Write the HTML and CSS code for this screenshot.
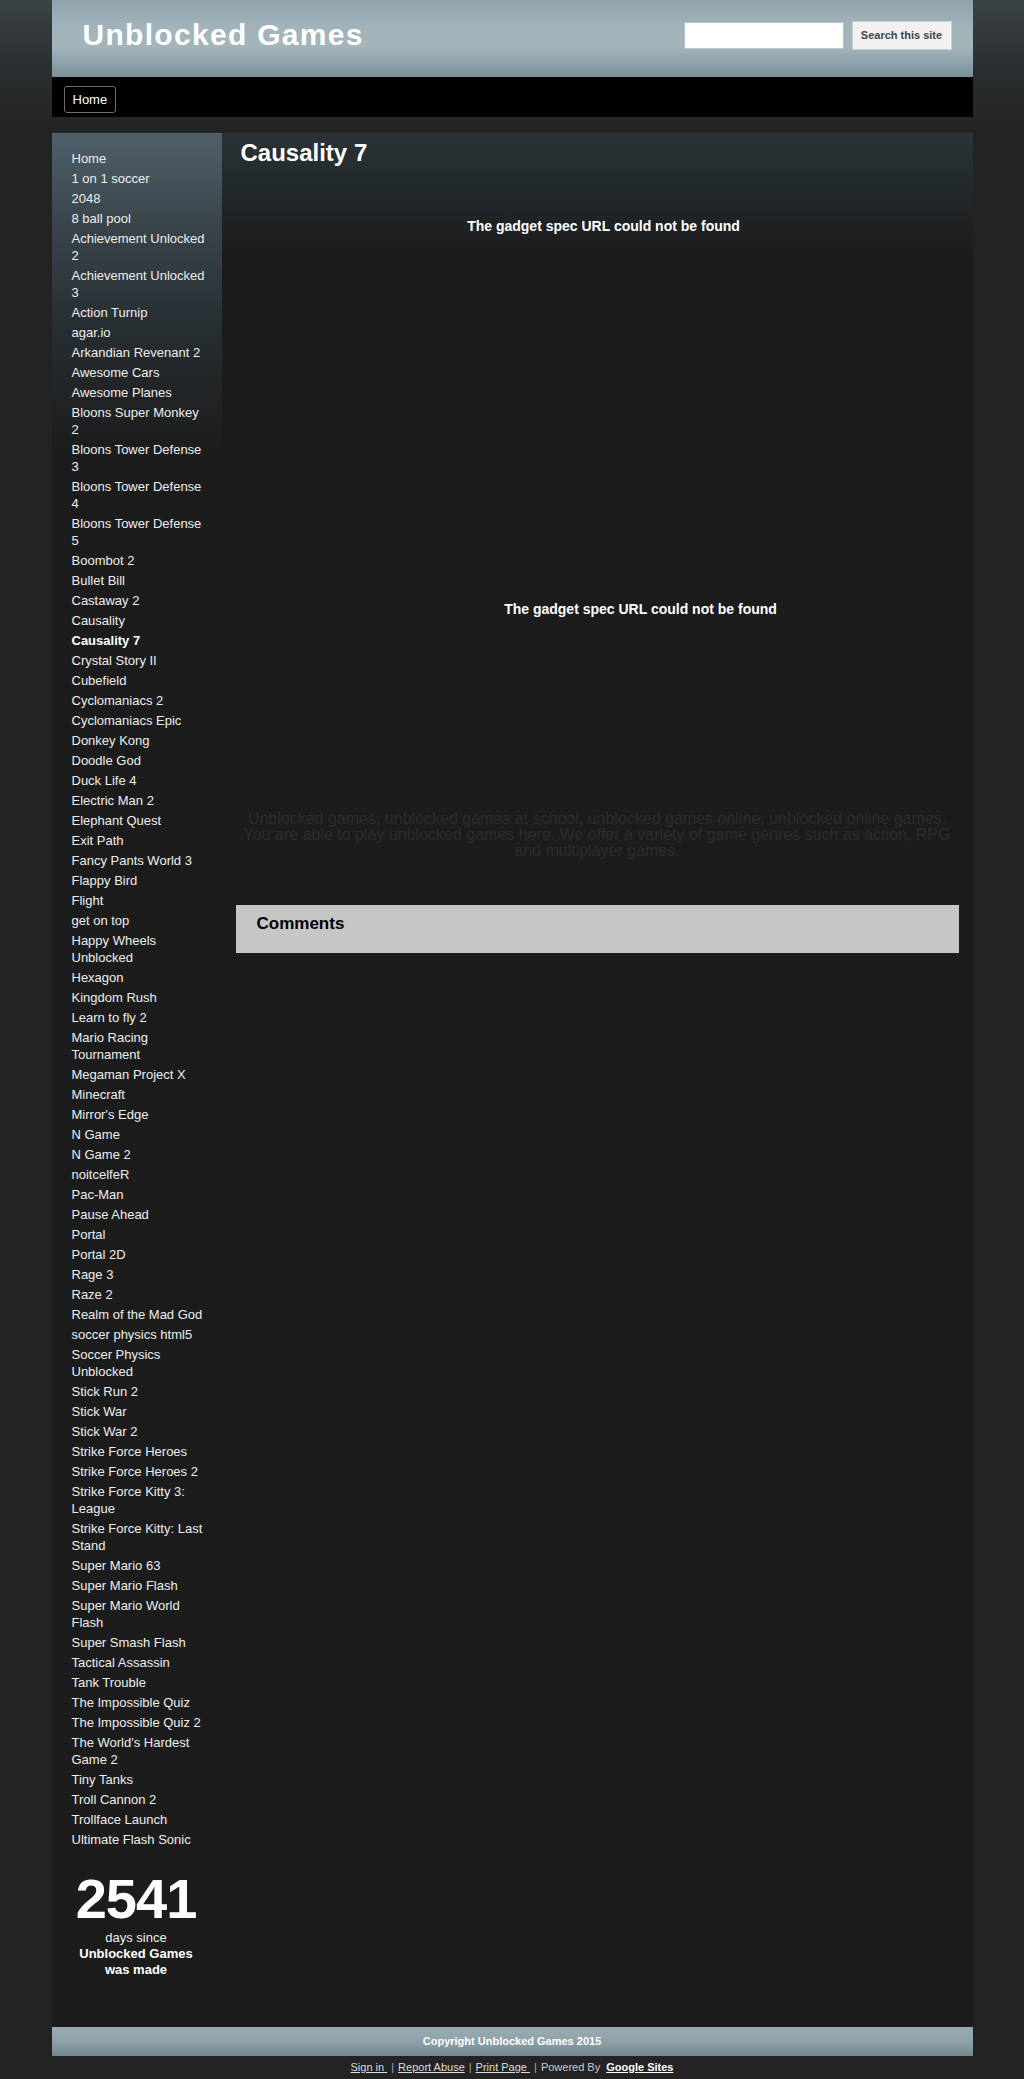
FILE: index.html
```html
<!DOCTYPE html>
<html lang="en">
<head>
  <meta charset="UTF-8">
  <meta name="viewport" content="width=device-width, initial-scale=1.0">
  <title>Causality 7 - Unblocked Games</title>
  <link rel="stylesheet" href="styles.css">
</head>
<body>
  <div class="page">
    <div class="header">
      <a class="site-title" href="#">Unblocked Games</a>
      <form class="search">
        <input type="text" class="search-box">
        <button type="button" class="search-btn">Search this site</button>
      </form>
    </div>

    <div class="nav">
      <a class="nav-item" href="#">Home</a>
    </div>

    <div class="content">
      <div class="sidebar">
        <ul class="game-list">
          <li><a href="#">Home</a></li>
          <li><a href="#">1 on 1 soccer</a></li>
          <li><a href="#">2048</a></li>
          <li><a href="#">8 ball pool</a></li>
          <li><a href="#">Achievement Unlocked 2</a></li>
          <li><a href="#">Achievement Unlocked 3</a></li>
          <li><a href="#">Action Turnip</a></li>
          <li><a href="#">agar.io</a></li>
          <li><a href="#">Arkandian Revenant 2</a></li>
          <li><a href="#">Awesome Cars</a></li>
          <li><a href="#">Awesome Planes</a></li>
          <li><a href="#">Bloons Super Monkey 2</a></li>
          <li><a href="#">Bloons Tower Defense 3</a></li>
          <li><a href="#">Bloons Tower Defense 4</a></li>
          <li><a href="#">Bloons Tower Defense 5</a></li>
          <li><a href="#">Boombot 2</a></li>
          <li><a href="#">Bullet Bill</a></li>
          <li><a href="#">Castaway 2</a></li>
          <li><a href="#">Causality</a></li>
          <li class="current"><a href="#">Causality 7</a></li>
          <li><a href="#">Crystal Story II</a></li>
          <li><a href="#">Cubefield</a></li>
          <li><a href="#">Cyclomaniacs 2</a></li>
          <li><a href="#">Cyclomaniacs Epic</a></li>
          <li><a href="#">Donkey Kong</a></li>
          <li><a href="#">Doodle God</a></li>
          <li><a href="#">Duck Life 4</a></li>
          <li><a href="#">Electric Man 2</a></li>
          <li><a href="#">Elephant Quest</a></li>
          <li><a href="#">Exit Path</a></li>
          <li><a href="#">Fancy Pants World 3</a></li>
          <li><a href="#">Flappy Bird</a></li>
          <li><a href="#">Flight</a></li>
          <li><a href="#">get on top</a></li>
          <li><a href="#">Happy Wheels Unblocked</a></li>
          <li><a href="#">Hexagon</a></li>
          <li><a href="#">Kingdom Rush</a></li>
          <li><a href="#">Learn to fly 2</a></li>
          <li><a href="#">Mario Racing Tournament</a></li>
          <li><a href="#">Megaman Project X</a></li>
          <li><a href="#">Minecraft</a></li>
          <li><a href="#">Mirror's Edge</a></li>
          <li><a href="#">N Game</a></li>
          <li><a href="#">N Game 2</a></li>
          <li><a href="#">noitcelfeR</a></li>
          <li><a href="#">Pac-Man</a></li>
          <li><a href="#">Pause Ahead</a></li>
          <li><a href="#">Portal</a></li>
          <li><a href="#">Portal 2D</a></li>
          <li><a href="#">Rage 3</a></li>
          <li><a href="#">Raze 2</a></li>
          <li><a href="#">Realm of the Mad God</a></li>
          <li><a href="#">soccer physics html5</a></li>
          <li><a href="#">Soccer Physics Unblocked</a></li>
          <li><a href="#">Stick Run 2</a></li>
          <li><a href="#">Stick War</a></li>
          <li><a href="#">Stick War 2</a></li>
          <li><a href="#">Strike Force Heroes</a></li>
          <li><a href="#">Strike Force Heroes 2</a></li>
          <li><a href="#">Strike Force Kitty 3: League</a></li>
          <li><a href="#">Strike Force Kitty: Last Stand</a></li>
          <li><a href="#">Super Mario 63</a></li>
          <li><a href="#">Super Mario Flash</a></li>
          <li><a href="#">Super Mario World Flash</a></li>
          <li><a href="#">Super Smash Flash</a></li>
          <li><a href="#">Tactical Assassin</a></li>
          <li><a href="#">Tank Trouble</a></li>
          <li><a href="#">The Impossible Quiz</a></li>
          <li><a href="#">The Impossible Quiz 2</a></li>
          <li><a href="#">The World's Hardest Game 2</a></li>
          <li><a href="#">Tiny Tanks</a></li>
          <li><a href="#">Troll Cannon 2</a></li>
          <li><a href="#">Trollface Launch</a></li>
          <li><a href="#">Ultimate Flash Sonic</a></li>
        </ul>

        <div class="counter">
          <div class="counter-num">2541</div>
          <div class="counter-text">days since<br><b>Unblocked Games<br>was made</b></div>
        </div>
      </div>

      <div class="main">
        <h1 class="page-title">Causality 7</h1>

        <div class="gadget gadget-one">
          <b>The gadget spec URL could not be found</b>
        </div>

        <div class="gadget gadget-two">
          <b>The gadget spec URL could not be found</b>
        </div>

        <p class="seo-text">Unblocked games, unblocked games at school, unblocked games online, unblocked online games.<br>You are able to play unblocked games here. We offer a variety of game genres such as action, RPG<br>and multiplayer games.</p>

        <div class="comments">
          <h3>Comments</h3>
        </div>
      </div>
    </div>

    <div class="footer">Copyright Unblocked Games 2015</div>
  </div>

  <div class="site-links">
    <a href="#">Sign in </a><span class="sep">|</span><a href="#">Report Abuse</a><span class="sep">|</span><a href="#">Print Page </a><span class="sep">|</span><span class="powered">Powered By</span><a class="google" href="#">Google Sites</a>
  </div>
</body>
</html>
```

FILE: styles.css
```css
body {
  margin: 0;
  font-family: 'Liberation Sans', Arial, sans-serif;
  font-size: 13px;
  color: #eeeeee;
  background: #232323 linear-gradient(#3b4246 0, #2a2e30 70px, #232323 135px) no-repeat;
}

a {
  color: #eeeeee;
  text-decoration: none;
}

.page {
  width: 921px;
  margin: 0 auto;
}

/* header */
.header {
  height: 77px;
  box-sizing: border-box;
  padding: 0 21px 7px 31px;
  display: flex;
  align-items: center;
  justify-content: space-between;
  background: linear-gradient(#8fa3ab 0, #a2b4bb 35%, #a4b5bc 60%, #8aa0a8 85%, #7a9099 100%);
}

.site-title {
  font-size: 30px;
  line-height: 34px;
  font-weight: bold;
  letter-spacing: 1.3px;
  color: #ffffff;
}

.search {
  display: flex;
  align-items: center;
  gap: 8px;
  margin: 0;
}

.search-box {
  width: 160px;
  height: 27px;
  box-sizing: border-box;
  border: 1px solid #b9c3c7;
  background: #ffffff;
  padding: 2px 4px;
}

.search-btn {
  width: 100px;
  height: 29px;
  border: 1px solid #c9d0d3;
  background: #f1f1f1;
  color: #444444;
  font-family: 'Liberation Sans', Arial, sans-serif;
  font-size: 11px;
  font-weight: bold;
  padding: 0;
}

/* nav */
.nav {
  height: 40px;
  box-sizing: border-box;
  background: #000000;
  padding: 9px 12px 0;
}

.nav-item {
  display: inline-block;
  height: 27px;
  line-height: 25px;
  box-sizing: border-box;
  padding: 0 8px;
  border: 1px solid #6d6d6d;
  border-radius: 3px;
  font-size: 13px;
  color: #ffffff;
}

/* content */
.content {
  margin-top: 16px;
  display: grid;
  grid-template-columns: 170px 1fr;
  background: #1c1c1c;
}

.sidebar {
  padding: 17px 15px 49px 20px;
  background: linear-gradient(#50606a 0, #3a454b 90px, #262d31 200px, #1c1c1c 320px);
}

.game-list {
  list-style: none;
  margin: 0;
  padding: 0;
}

.game-list li {
  line-height: 17px;
  margin-bottom: 3px;
}

.game-list li.current a {
  font-weight: bold;
  color: #ffffff;
}

.counter {
  margin-top: 22px;
  padding-right: 6px;
  text-align: center;
  color: #ffffff;
}

.counter-num {
  font-size: 56px;
  line-height: 58px;
  font-weight: bold;
  letter-spacing: -1px;
}

.counter-text {
  margin-top: 2px;
  line-height: 16px;
  color: #eeeeee;
}

.counter-text b {
  color: #ffffff;
}

.main {
  padding: 6px 14px 0;
  background: linear-gradient(#2a3337 0, #22282b 60px, #1c1c1c 120px) no-repeat;
}

.page-title {
  margin: 0;
  padding-left: 5px;
  font-size: 24px;
  line-height: 28px;
  color: #ffffff;
}

.gadget {
  box-sizing: border-box;
  padding-top: 51px;
  text-align: center;
  font-size: 14px;
  line-height: 17px;
  color: #ffffff;
}

.gadget-one {
  height: 383px;
  padding-left: 13px;
}

.gadget-two {
  height: 261px;
  padding-left: 87px;
}

.seo-text {
  margin: 0 -10px;
  text-align: center;
  font-size: 16px;
  line-height: 16px;
  white-space: nowrap;
  color: #2c2c2c;
}

.comments {
  margin-top: 46px;
  height: 48px;
  box-sizing: border-box;
  padding: 9px 21px 0;
  background: #c6c6c6;
}

.comments h3 {
  margin: 0;
  font-size: 17px;
  line-height: 20px;
  color: #000000;
}

/* footer */
.footer {
  height: 29px;
  line-height: 29px;
  text-align: center;
  font-size: 11px;
  font-weight: bold;
  color: #ffffff;
  background: linear-gradient(#9aabb2 0, #8ea1a9 50%, #71878f 100%);
}

.site-links {
  height: 23px;
  line-height: 23px;
  text-align: center;
  font-size: 11px;
  color: #cccccc;
}

.site-links a {
  color: #dddddd;
  text-decoration: underline;
}

.site-links .sep {
  margin: 0 4px;
  color: #aaaaaa;
}

.site-links .powered {
  margin-right: 6px;
}

.site-links a.google {
  font-weight: bold;
  color: #ffffff;
}
```
